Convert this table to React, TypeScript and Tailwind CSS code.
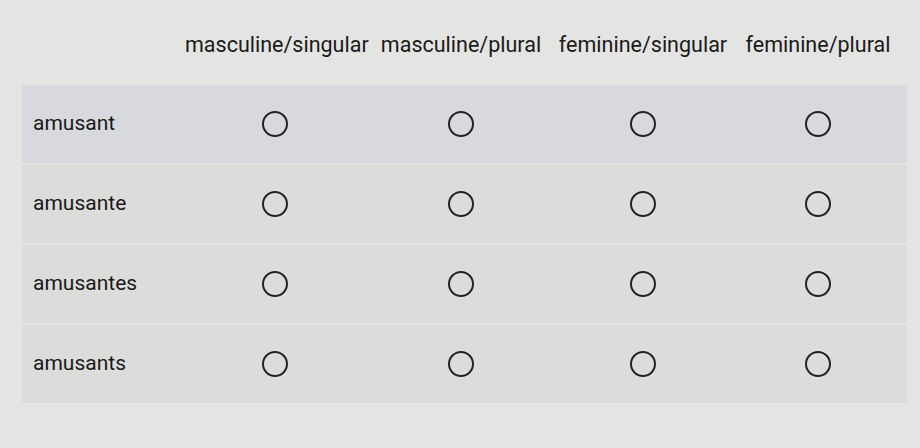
import React from "react";

const headers = ["masculine/singular", "masculine/plural", "feminine/singular", "feminine/plural"];
const rows = ["amusant", "amusante", "amusantes", "amusants"];

function Radio() {
  return <span className="block h-[26px] w-[26px] rounded-full border-[2.5px] border-[#222222]" />;
}

const cols = "grid-cols-[163px_180px_192px_172px_178px]";

export default function App() {
  return (
    <div
      className="h-[448px] w-[920px] overflow-hidden bg-[#e4e4e2] text-[#1a1a1a]"
      style={{ fontFamily: "Roboto, 'Liberation Sans', sans-serif" }}
    >
      <div className="ml-[22px] w-[885px] pt-[30px]">
        <div className={`grid ${cols} items-center`}>
          <div />
          {headers.map((h) => (
            <div key={h} className="text-center text-[21.5px] leading-[30px] whitespace-nowrap">
              {h}
            </div>
          ))}
        </div>
        <div className="mt-[25px] flex flex-col gap-[2px]">
          {rows.map((r, i) => (
            <div
              key={r}
              className={`grid h-[78px] ${cols} items-center ${
                i === 0 ? "bg-[#d7d9de]" : "bg-[#dcdcdb]"
              }`}
            >
              <div className="pl-[11px] text-[21px]">{r}</div>
              {headers.map((h) => (
                <div key={h} className="flex justify-center">
                  <Radio />
                </div>
              ))}
            </div>
          ))}
        </div>
      </div>
    </div>
  );
}
